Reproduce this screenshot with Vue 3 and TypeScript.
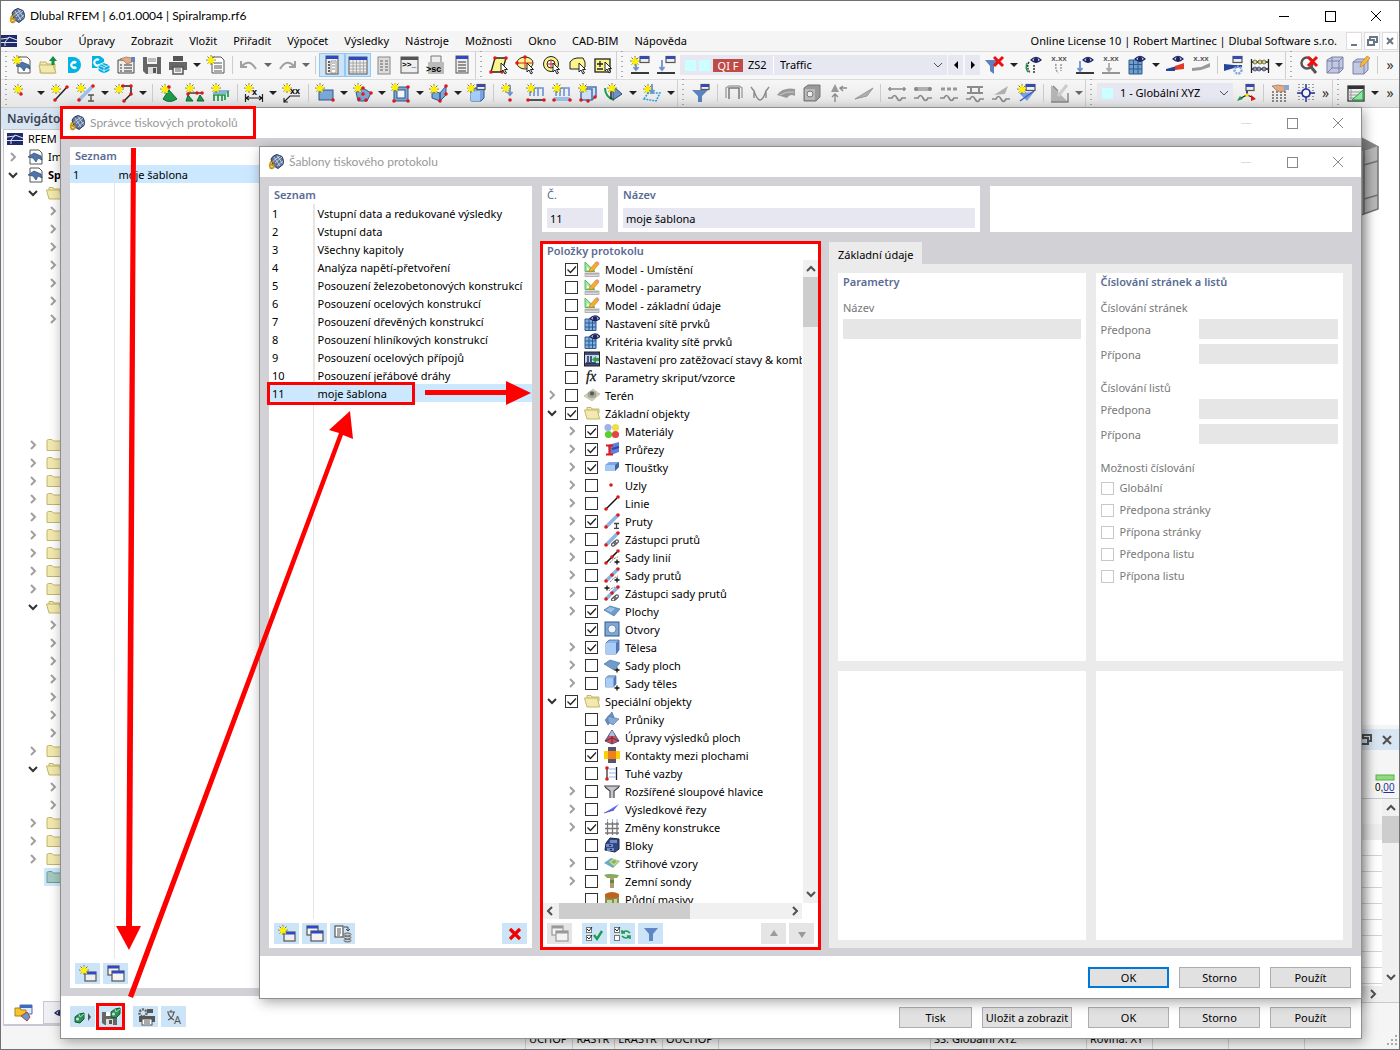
<script setup lang="ts">
import { ref } from 'vue'

type Tool = { k: 'icon' | 'caret' | 'sep' | 'grip'; n?: string; on?: boolean; off?: boolean }
type Item = { t: string; i: string; l: number; c: boolean; e?: 'open' | 'closed' }
type NavRow = { l: number; e?: 'open' | 'closed'; i?: string; t?: string; b?: boolean; s?: boolean }

const star = (x: number, y: number) =>
  `<g transform="translate(${x} ${y})"><path d="M0-5V5M-5 0H5M-3.500-3.500L3.500 3.500M3.500-3.500L-3.500 3.500" stroke="#77774a" stroke-width="1"/><path d="M0-4.500L1.400-1.700 4.500-1 2.300 1.200 3 4.300 0 2.800-3 4.300-2.300 1.200-4.500-1-1.400-1.700z" fill="#fff000"/></g>`
const dot = (x: number, y: number) => `<circle cx="${x}" cy="${y}" r="1.800" fill="#e01818"/>`
const win = (x: number, y: number, w: number, h: number) =>
  `<rect x="${x}" y="${y}" width="${w}" height="${h}" fill="#eee" stroke="#555" stroke-width="1.200"/><rect x="${x}" y="${y}" width="${w}" height="2.500" fill="#2f48c8"/>`
const eye = (x: number, y: number) =>
  `<g transform="translate(${x} ${y})"><path d="M-5 0Q0-5.500 5 0Q0 4.500-5 0z" fill="#c6cdf0" stroke="#1d2460" stroke-width="1.200"/><circle r="2.200" fill="#1d2460"/></g>`
const link = (x: number, y: number) =>
  `<g transform="translate(${x} ${y}) rotate(-40)" fill="none" stroke="#555" stroke-width="1.200"><rect x="-4" y="-1.500" width="5" height="3" rx="1.500"/><rect x="-1" y="-1.500" width="5" height="3" rx="1.500"/></g>`
const plus = (x: number, y: number) => `<path d="M${x - 2.5} ${y}h5M${x} ${y - 2.5}v5" stroke="#111" stroke-width="1.300"/>`
const arrowDown = (x: number, y: number, h: number, c: string) =>
  `<path d="M${x} ${y}v${h}M${x - 2.5} ${y + h - 3}l2.500 3 2.500-3" fill="none" stroke="${c}" stroke-width="1.800"/>`
const xxx = (y: number) => `<text x="10" y="${y}" text-anchor="middle" font-size="8" font-weight="700" font-family="Liberation Sans, sans-serif" fill="#555">x.xx</text>`
const wave = (y: number) => `<path d="M1 ${y}h4q2.500-5 5 0t5 0h4" fill="none" stroke="#8b8b8b" stroke-width="1.700"/>`
const folder = '<path d="M1 4q0-1.500 1.500-1.500h3.500l1.500 1.500h8v9.500h-14.500z" fill="#f2e9ae" stroke="#c3b566"/>'
const ruler = '<path d="M1 1l10 9.500H1z" fill="#9fe6a0" stroke="#5db662"/><path d="M3 6l3 3H3z" fill="#fff"/><path d="M5 9l7-8 3 2-6 7-3 1z" fill="#f4ae2c" stroke="#b77b20" stroke-width=".600"/><path d="M11.500 1.500l1.500-1.500 2.500 2-1.500 2z" fill="#e98f8f"/><rect x="1" y="12" width="14" height="3.500" fill="#ddd" stroke="#999" stroke-width=".700"/><path d="M3 12v2M5 12v2M7 12v2M9 12v2M11 12v2M13 12v2" stroke="#888" stroke-width=".700"/>'
const mesh = '<path d="M1 4h11v11.500H1z" fill="#7fb2e5" stroke="#31598c"/><path d="M5 4v11M8.500 4v11M1 8h11M1 12h11" stroke="#31598c"/>'
const cube = '<path d="M2 4l3-3h10v10l-3 4H2z" fill="#8db5e8" stroke="#44699f" stroke-width=".800"/><path d="M2 4h10v11H2z" fill="#a9cdf8"/><path d="M12 4l3-3v10l-3 4z" fill="#4f78b5"/>'
const beam = '<path d="M2 14L14 2" stroke="#8fb4e4" stroke-width="3.500"/>'
const wins = (c: string, h: string) =>
  `<rect x="2" y="2" width="11" height="9" fill="#f4f4f4" stroke="${c}" stroke-width="1.200"/><rect x="2" y="2" width="11" height="2.500" fill="${h}"/><rect x="6" y="7" width="12" height="10" fill="#f4f4f4" stroke="${c}" stroke-width="1.200"/><rect x="6" y="7" width="12" height="2.500" fill="${h}"/>`
const greenBlock = (x: number, y: number) =>
  `<g transform="translate(${x} ${y})"><path d="M0 4l4-3 5-1v6l-4 4-5-1z" fill="#2f8f58" stroke="#165a34"/><circle cx="2.500" cy="6" r="1.500" fill="#bfe8cf"/><path d="M4 1l1 3 4-3" stroke="#9be0b8" fill="none"/></g>`

// 16 × 16 glyphs used in trees, 20 × 20 glyphs used on tool buttons
const small: Record<string, string> = {
  logo: '<path d="M3 5q2-4 6-4.500l5 2q2.500 4 1 8l-5 4-5-3z" fill="#5b7399" stroke="#2c3c5c"/><path d="M6 3l6 9M9 1.500l5.500 8M5 7l7-5M7 9l7-6M9 12l6-5" stroke="#d5e0f0" stroke-width=".800"/><text x="1" y="15" font-size="10" font-weight="700" font-family="Noto Sans, sans-serif" fill="#e8b40a" stroke="#7a5b00" stroke-width=".400">6</text>',
  rfem: '<path d="M0 2h16v12H0z" fill="#1f2a6b"/><path d="M0 9.500h16M4 9v4M4 9L8 4l8 3M0 6l8-1" stroke="#dfe4f5" fill="none"/>',
  doc: '<path d="M2 1h9l3 3v11H2z" fill="#fff" stroke="#555"/><path d="M0 8l6-4 7 3 1 4-4-2-2 4-3-4z" fill="#4d76a8" stroke="#2b4a73" stroke-width=".700"/>',
  folder,
  folderOpen: '<path d="M3 4v-1.500h4l1 1.500h7v4H3z" fill="#f2e9ae" stroke="#c3b566"/><path d="M0.500 5h13l2 9h-12.500z" fill="#f2e9ae" stroke="#c3b566"/>',
  folderGreen: '<path d="M1 4q0-1.500 1.500-1.500h3.500l1.500 1.500h8v9.500h-14.500z" fill="#a6c9bf" stroke="#6f9c8d"/>',
  ruler,
  mesh: mesh + eye(11, 3.500),
  load: '<rect x=".500" y="1" width="15" height="14" fill="#3d4c78" stroke="#222"/><rect x="1" y="4" width="14" height="8" fill="#c7d5ea"/><path d="M4 5v6M7 5v6M2 12h10" stroke="#1d2c58" stroke-width="1.500"/><path d="M15 7h-3v-2l-4 3.500 4 3.500v-2h3z" fill="#29a444"/>',
  fx: '<text x="2" y="12" font-size="14" font-style="italic" font-family="Liberation Serif, serif" fill="#111" stroke="#111" stroke-width=".300">fx</text>',
  terrain: '<path d="M0 9l9-7 7 5-8 7z" fill="#cfcfbb" stroke="#b3b39b" stroke-width=".600"/><ellipse cx="8" cy="7.500" rx="4.500" ry="3.500" fill="#a4a596"/><circle cx="8" cy="6.500" r="2" fill="#55565a"/>',
  material: '<circle cx="4" cy="4.500" r="3.600" fill="#9fb0ea"/><circle cx="11.500" cy="4.500" r="3.600" fill="#ebe04a"/><circle cx="4.500" cy="11.500" r="3.600" fill="#5ad02a"/><circle cx="11.500" cy="11.500" r="3.600" fill="#e24646"/>',
  section: '<path d="M4 4l11-3v10l-8 3z" fill="#6280d8"/><path d="M8 8l7-2" stroke="#2d47a5" stroke-width="2"/><path d="M2 4.500h7M2 13.500h7M5.500 4.500v9" stroke="#e01818" stroke-width="2.200"/>',
  thick: '<path d="M1 6l4-3 10 0v5l-4 4H1z" fill="#7ea8de"/><path d="M1 6h10v6H1z" fill="#a3c8f4"/><path d="M11 6l4-3v5l-4 4z" fill="#41699f"/>',
  node: dot(7, 8),
  line: '<path d="M2 14L13 3" stroke="#111" stroke-width="1.400"/>' + dot(2, 14) + dot(14, 2),
  member: beam + dot(2, 14) + dot(14, 2) + '<path d="M10 10.500h5M10 15.500h5M12.500 10.500v5" stroke="#444" stroke-width="1.300"/>',
  memberRep: beam + dot(2, 14) + dot(14, 2) + link(11, 12),
  lineSet: '<path d="M2 14L13 3" stroke="#111" stroke-width="1.600"/><path d="M6 14q2-4 8-6" stroke="#777" stroke-dasharray="2 1" fill="none"/>' + dot(2, 14) + dot(8, 8) + dot(14, 2) + plus(13, 13),
  memberSet: beam + '<path d="M6 15q3-4 8-6" stroke="#777" stroke-dasharray="2 1" fill="none"/>' + dot(2, 14) + dot(8, 8) + dot(14, 2) + plus(13, 13),
  memberSetRep: beam + dot(2, 14) + dot(8, 8) + dot(14, 2) + plus(3, 3) + '<path d="M5 6q2-3 6-4" stroke="#777" stroke-dasharray="2 1" fill="none"/>' + link(11, 13),
  surface: '<path d="M0 7l6-4 10 3-6 7z" fill="#6f9cca" stroke="#4a75a6" stroke-width=".700"/><path d="M2 7l4-3 5 1.500-4 4z" fill="#9dc0e4"/>',
  opening: '<rect x="1" y="1" width="14" height="14" fill="#7fa8d4" stroke="#31598c"/><circle cx="8" cy="8" r="4" fill="#eef5fb" stroke="#31598c" stroke-width=".600"/>',
  solid: cube,
  surfaceSet: '<path d="M0 7l6-4 10 3-6 7z" fill="#6f9cca" stroke="#4a75a6" stroke-width=".700"/>' + plus(13, 13),
  solidSet: '<g transform="scale(.800)">' + cube + '</g>' + plus(13, 13),
  intersect: '<path d="M1 9l7-8 2 5-6 8z" fill="#6e95c4" stroke="#44699f" stroke-width=".600"/><path d="M4 5l11 3-6 6-5-3z" fill="#86abd6" stroke="#44699f" stroke-width=".600"/>',
  resultAdj: '<path d="M8 1L1 12l7 3 7-3z" fill="#d64a55" stroke="#3a4d73" stroke-width=".800"/><path d="M8 1v14M1 12l7-3 7 3" stroke="#24365c" stroke-width=".800" fill="none"/><path d="M8 1L5 7h6z" fill="#a9c1e4"/>',
  contact: '<rect x="4" width="8" height="16" fill="#55556c"/><rect y="4" width="16" height="8" fill="#ffcc00"/><rect x="4" y="4" width="8" height="8" fill="#f08018"/>',
  rigid: '<path d="M3 3v11" stroke="#222" stroke-width="1.200"/><path d="M12.500 2v13" stroke="#222" stroke-width="1.300"/><path d="M5 4h7M5 8h7M5 12h7" stroke="#8db7e8"/>' + dot(3, 3) + dot(3, 14),
  column: '<path d="M0 3h16l-5 4-1.500 1v7h-3V8L5 7z" fill="#c3c6d0"/><path d="M0 3h16M1 4l5 4v7M15 4l-5 4v7" stroke="#444" stroke-width="1.200" fill="none"/>',
  cut: '<path d="M0 12L15 3l-5 6z" fill="#5c6ef0"/><path d="M0 12l10-3" stroke="#2c3aa0" stroke-width=".700"/>',
  grid: '<path d="M3.500 3v13M8.500 3v13M13 3v13M1 5h14M1 9.500h14M1 14h14" stroke="#777" stroke-width="1.300"/><path d="M3.500 0v3M8.500 0v3M13 0v3" stroke="#8db7e8"/>',
  block: '<path d="M2 6l4-5 9 1v10l-4 3-10-2z" fill="#32477f" stroke="#18244a"/><path d="M2 7h7v3H2zM3 11h7v3H3zM6 3h7v3H6z" fill="#6e8bcb"/><circle cx="6" cy="8.500" r=".800"/><circle cx="7" cy="12.500" r=".800"/>',
  pattern: '<path d="M0 8l7-5 9 3-7 7z" fill="#69abc4"/><path d="M5 7l4-3 6 2-5 5z" fill="#d6dd58"/><path d="M7 7l3-2 3 1-3 3z" fill="#77b08a"/>',
  probe: '<path d="M0 2q4-2 15 0l-2 3H3z" fill="#7fae5e"/><path d="M6 4h4v11H6z" fill="#b19a6a"/><path d="M6 7h4v3H6z" fill="#5d8a4a"/>',
  soil: '<path d="M1 3q7-4 14 0v4q-7 3-14 0z" fill="#bf641f"/><path d="M1 6q7 3 14 0v9H1z" fill="#8b8b58"/><path d="M3 9h5v4H3zM10 8h3v5h-3z" fill="#b6e08c"/>',
}

const big: Record<string, string> = {
  newModel: '<path d="M6 2h9l3 3v13H6z" fill="#fff" stroke="#555"/><path d="M4 11l6-4 7 3 1 4-4-2-2 4-3-4z" fill="#4d76a8" stroke="#2b4a73" stroke-width=".700"/>' + star(5, 5),
  open: '<path d="M2 7h6l1 2h8v9H2z" fill="#f2e9ae" stroke="#c3b566"/><path d="M1 10h14l3 8H3z" fill="#f2e9ae" stroke="#c3b566"/><path d="M15 1l4 5h-2.500v4h-3V6H11z" fill="#129044"/>',
  cblue: '<path d="M4 2h5a8 8 0 0 1 0 16H4z" fill="#00b4e6"/><path d="M13 7a4 4 0 1 0 0 6l-2-2a1.500 1.500 0 1 1 0-2z" fill="#fff"/>',
  cubes: '<path d="M2 1h8l4 3v9H2z" fill="#00b4e6"/><path d="M9 5a3 3 0 1 0 0 5" stroke="#fff" stroke-width="2" fill="none"/><path d="M8 10l6-2.500 6 2.500v6l-6 3-6-3z" fill="#00a9dc" stroke="#fff"/><path d="M8 10l6 2.500 6-2.500M14 12.500V19M11 9l6 2.500M8 13l6 3 6-3" stroke="#fff" fill="none" stroke-width=".700"/>',
  hand: '<path d="M2 5h16v13H2z" fill="#eee" stroke="#444"/><path d="M4 10h2M8 10h8M4 13h2M8 13h8M4 16h2M8 16h8" stroke="#333"/><path d="M4 4l6-2 6 1v4l-5 2-3-3z" fill="#e0ac86" stroke="#8b5f43" stroke-width=".600"/><path d="M15 2h4v5h-4z" fill="#6386be"/>',
  save: '<path d="M1 2h18v17H4l-3-3z" fill="#666"/><rect x="5" y="2" width="10" height="7" fill="#f4f4f4"/><path d="M6 4h8M6 6h8" stroke="#888"/><rect x="6" y="12" width="9" height="7" fill="#ddd"/><rect x="11" y="13" width="3" height="5" fill="#555"/>',
  print: '<rect x="5" y="1" width="10" height="5" fill="#555"/><path d="M1 7h18v8h-4v-3H5v3H1z" fill="#666"/><path d="M5 12h10v7H5z" fill="#f4f4f4" stroke="#555" stroke-width="1.500"/><path d="M7 14h6M7 16h6" stroke="#666"/>',
  report: '<path d="M6 2h9l3 3v13H6z" fill="#fff" stroke="#555"/><path d="M8 8h8M8 11h8M8 13h8M8 16h8" stroke="#555"/>' + star(5, 5),
  undo: '<path d="M2 6v6h6M3 11q7-8 14 3" fill="none" stroke="#a0a0a0" stroke-width="2"/>',
  redo: '<path d="M18 6v6h-6M17 11q-7-8-14 3" fill="none" stroke="#a0a0a0" stroke-width="2"/>',
  panel: '<rect x="4" y="1" width="12" height="18" fill="#eee" stroke="#555"/><rect x="4" y="1" width="12" height="3" fill="#2f48c8"/><path d="M6 7h2M6 10h2M6 13h2M6 16h2" stroke="#333" stroke-width="1.500"/><path d="M9 6h5v12H9z" fill="#fff" stroke="#777" stroke-width=".700"/><path d="M10 8h3M10 11h3M10 14h3" stroke="#888"/>',
  table: '<rect x="1" y="2" width="18" height="17" fill="#eee" stroke="#555"/><rect x="1" y="2" width="18" height="3" fill="#2f48c8"/><path d="M1 8h18M1 11h18M1 14h18M1 17h18M5 5v14M8.500 5v14M12 5v14M15.500 5v14" stroke="#999" stroke-width=".800"/>',
  panelGrey: '<rect x="4" y="2" width="12" height="17" fill="#ddd" stroke="#888"/><path d="M6 6h3M6 9h3M6 12h3M6 15h3M11 6h3M11 9h3M11 12h3M11 15h3" stroke="#888" stroke-width="1.500"/>',
  console: '<rect x="1" y="2" width="17" height="16" fill="#eee" stroke="#555"/><rect x="1" y="2" width="17" height="3" fill="#555"/><text x="2" y="12" font-size="8" font-weight="700" font-family="Liberation Mono, monospace">&gt;&gt;_</text>',
  script: '<path d="M5 1h10v7H5z" fill="#eee" stroke="#777"/><path d="M2 7h16v12H2z" fill="#bbb"/><text x="0" y="17" font-size="9" font-weight="700" font-family="Liberation Sans, sans-serif">&gt;sc</text>',
  panel2: '<rect x="4" y="1" width="12" height="17" fill="#eee" stroke="#555"/><rect x="4" y="1" width="12" height="3" fill="#2f48c8"/><path d="M6 7h8M6 10h8M6 13h8M6 16h8" stroke="#333" stroke-width="1.200"/>',
  selRect: '<path d="M6 3h11l-4 14H2z" fill="#fbf58c" stroke="#222" stroke-width="1.300"/>' + dot(6, 3) + dot(17, 3) + dot(13, 17) + dot(2, 17) + '<path d="M12 8v9l2-2 2 4 1.500-1-2-3.500h3z" fill="#fff" stroke="#222"/>',
  selEll: '<ellipse cx="10" cy="8" rx="8" ry="6" fill="#fbf58c" stroke="#222"/><path d="M10 3v10M3 8h14" stroke="#e01818"/>' + dot(10, 2) + dot(2, 8) + '<path d="M12 8v9l2-2 2 4 1.500-1-2-3.500h3z" fill="#fff" stroke="#222"/>',
  selRing: '<circle cx="10" cy="9" r="7.500" fill="#fbf58c" stroke="#222"/><circle cx="10" cy="9" r="4" fill="#fff" stroke="#222"/><path d="M10 5v8M6 9h8" stroke="#e01818"/><path d="M12 8v9l2-2 2 4 1.500-1-2-3.500h3z" fill="#fff" stroke="#222"/>',
  selLasso: '<path d="M3 7q3-4 7-4h6l2 4v5q-3 3-7 2H3z" fill="#fbf58c" stroke="#222"/><path d="M12 8v9l2-2 2 4 1.500-1-2-3.500h3z" fill="#fff" stroke="#222"/>',
  selBox: '<rect x="2" y="4" width="15" height="13" fill="#fbf58c" stroke="#222" stroke-width="1.300"/><path d="M7 6v6M4 9h6M4 14h6" stroke="#222" stroke-width="1.300"/><path d="M12 7v9l2-2 2 4 1.500-1-2-3.500h3z" fill="#fff" stroke="#222"/>',
  lcNew: '<path d="M1 18h18" stroke="#222" stroke-width="1.800"/>' + win(10, 1.5, 9, 6) + arrowDown(6, 3, 12, '#6b93cf') + star(5, 6),
  lcEdit: '<path d="M1 18h18" stroke="#222" stroke-width="1.800"/>' + win(10, 1.5, 9, 6) + arrowDown(6, 5, 10, '#6b93cf'),
  filterX: '<path d="M0 5h14L9 11v8l-4-3v-5z" fill="#5b82bd"/><path d="M9 2l9 9M18 2l-9 9" stroke="#ee1010" stroke-width="3"/>',
  eyeDef: eye(13, 5) + '<path d="M6 7q-3 5 1 11M11 10v8" stroke="#333" stroke-width="1.500" fill="none" stroke-dasharray="2 1"/><path d="M4 8q-2 5 1 9" stroke="#1e9b50" stroke-width="1.500" fill="none"/>',
  xxDef: xxx(6) + '<path d="M7 9q-1 5 2 9M12 9v7" stroke="#999" stroke-width="1.500" fill="none" stroke-dasharray="2 1"/>',
  eyeLoad: eye(13, 5) + '<path d="M1 18h18" stroke="#222" stroke-width="1.800"/>' + arrowDown(5, 6, 10, '#6b93cf'),
  xxLoad: xxx(6) + '<path d="M1 18h18" stroke="#888" stroke-width="1.800"/>' + arrowDown(8, 8, 8, '#aaa'),
  meshEye: '<path d="M2 5h13v14H2z" fill="#6fa0d0" stroke="#31598c"/><path d="M6.500 5v14M11 5v14M2 9.500h13M2 14h13" stroke="#31598c"/>' + eye(13, 4),
  eyeRes: '<path d="M1 14l9-2.500v4.500L1 16z" fill="#26459b"/><path d="M10 11l9-3v6l-9 1z" fill="#df3a2a"/>' + eye(13, 4),
  xxRes: xxx(6) + '<path d="M1 13l9-1 9-4v4l-9 3-9 1z" fill="#999"/>',
  resWin: '<path d="M0 9l10 1h8v2l-8 1-10 3z" fill="#26459b"/>' + win(9, 1.5, 9, 6) + '<circle cx="14" cy="15" r="3.500" fill="none" stroke="#7fa4df" stroke-width="2.400" stroke-dasharray="2 1"/>',
  abacus: '<path d="M1.500 4v14M18.500 4v14M1 7h18M1 14h18" stroke="#222" stroke-width="1.300"/><g fill="#ded66e" stroke="#444" stroke-width=".700"><circle cx="5" cy="7" r="2"/><circle cx="10" cy="7" r="2"/><circle cx="14" cy="7" r="2"/></g><g fill="#8393cf" stroke="#333" stroke-width=".700"><circle cx="5" cy="14" r="2"/><circle cx="9" cy="14" r="2"/><circle cx="14" cy="14" r="2"/></g>',
  magX: '<circle cx="8" cy="8" r="5.500" fill="none" stroke="#555" stroke-width="2.500"/><path d="M12 12l5 6" stroke="#555" stroke-width="3"/><path d="M9 2l9 9M18 2l-9 9" stroke="#ee1010" stroke-width="3"/>',
  cubeG: '<path d="M2 5l5-3h11v12l-4 4H2z" fill="#c3c8e2" stroke="#7a80a5"/><path d="M2 6h12v12M14 6l4-4M7 2v11L2 18M7 13h11" fill="none" stroke="#7a80a5"/>',
  cubePen: '<path d="M2 7l4-3h11v11l-4 4H2z" fill="#c3c8e2" stroke="#7a80a5"/><path d="M2 7h11v12M13 7l4-3" fill="none" stroke="#7a80a5"/><path d="M9 12l1-4 6-7 3 2-6 7z" fill="#f6ba3c" stroke="#a87a1e" stroke-width=".600"/>',
  nNode: star(6, 6) + dot(9, 11),
  nLine: '<path d="M5 17L17 4" stroke="#222" stroke-width="1.500"/>' + star(6, 6) + dot(5, 17) + dot(17, 4),
  nMember: '<path d="M3 17L17 3" stroke="#9cc0ea" stroke-width="3.500"/>' + star(5, 5) + dot(3, 17) + dot(17, 3) + '<path d="M12 12h6M12 18h6M15 12v6" stroke="#555" stroke-width="1.400"/>',
  nPoly: '<path d="M7 3h10v8l-7 7" fill="none" stroke="#222" stroke-width="1.500"/>' + star(5, 6) + dot(17, 3) + dot(17, 11) + dot(10, 18) + dot(9, 3),
  nSupport: '<path d="M10 7l8 9q-8 5-14 0z" fill="#1f9a4b" stroke="#0e6c30"/>' + star(6, 6) + dot(10, 4),
  nLineSup: '<path d="M3 10h15" stroke="#222" stroke-width="1.300"/><path d="M3 12l5 6H1zM15 12l4 6h-7z" fill="#1f9a4b" stroke="#0e6c30"/>' + star(5, 5) + dot(12, 10) + dot(3, 11) + dot(17, 10),
  nSurfSup: '<path d="M2 9l5-2h12l-4 4H2z" fill="#8db5d9"/><path d="M2 12h12v5M3 12v6M7 12v6M11 12v6M17 8v6" stroke="#1f9a4b" stroke-width="1.700" fill="none"/>' + star(5, 5),
  dimX: '<path d="M1.500 11v8M18.500 11v8M2 15h16M5 13l-3 2 3 2M15 13l3 2-3 2" stroke="#222" fill="none" stroke-width="1.200"/><text x="8" y="12" font-size="9" font-weight="700" font-family="Liberation Sans, sans-serif">x</text>' + star(5, 5),
  dimXX: '<path d="M18 13H8l-6 6M2 15v4h4" stroke="#222" fill="none" stroke-width="1.200"/><text x="8" y="11" font-size="9" font-weight="700" font-family="Liberation Sans, sans-serif">xx</text>' + star(5, 5),
  nSurf: '<rect x="4" y="7" width="14" height="10" fill="#7ba6d6" stroke="#31598c"/>' + star(5, 5) + dot(18, 17),
  nSurf2: '<path d="M3 9l7-4 8 5-4 8H5z" fill="#7ba6d6" stroke="#31598c"/>' + star(5, 5) + dot(10, 5) + dot(18, 10) + dot(13, 17) + dot(6, 16) + dot(10, 11),
  nOpen: '<rect x="3" y="4" width="14" height="14" fill="#7ba6d6" stroke="#31598c"/><rect x="6" y="7" width="8" height="8" fill="#f5f5f5" stroke="#31598c"/>' + star(4, 4) + dot(17, 4) + dot(17, 18) + dot(3, 18),
  nSolid: '<path d="M3 8l8 2v8l-8-3zM11 10l6-7v9l-6 6z" fill="#7ba6d6" stroke="#31598c"/>' + star(5, 6) + dot(17, 3) + dot(11, 18) + dot(17, 11),
  nSolidW: '<path d="M4 7l3-2h10v10l-3 3H4z" fill="#7ba6e0" stroke="#31598c"/><path d="M4 8h9v10H4z" fill="#a5cdfa"/>' + win(10, 1.5, 8, 5) + star(4, 5),
  lNode: arrowDown(10, 2, 10, '#6b93cf') + star(6, 5) + dot(10, 17),
  lMem: '<path d="M4 5h13v8M8 5v8M12 5v8M4 5v8" stroke="#6b93cf" stroke-width="1.600" fill="none"/><path d="M2 17h16" stroke="#222" stroke-width="1.500"/>' + star(5, 5) + dot(2, 17) + dot(18, 17),
  lSurf: '<path d="M4 5h13v8M8 5v8M12 5v8M4 5v8" stroke="#6b93cf" stroke-width="1.600" fill="none"/><path d="M2 16h16" stroke="#9cc0ea" stroke-width="4"/>' + star(5, 5) + dot(2, 17) + dot(18, 17),
  lSolid: '<path d="M3 6l4-2h11v9l-4 4H3zM3 6h11v11" stroke="#4f76b5" stroke-width="1.600" fill="#cfe0f5"/>' + star(5, 5) + dot(3, 17) + dot(10, 18) + dot(17, 14),
  lFree: '<path d="M1 5q0 9 9 12" stroke="#1e9b50" stroke-width="2" fill="none"/><path d="M9 3v14l9-6z" fill="#6e93c5" stroke="#2b4a73"/><path d="M7 4v12" stroke="#222" stroke-width="1.500"/>' + star(8, 5),
  lDash: '<path d="M2 16l4-6h12l-4 8z" fill="none" stroke="#2aa0e0" stroke-width="1.500" stroke-dasharray="2 1"/>' + star(6, 6) + arrowDown(10, 1, 9, '#6b93cf'),
  filterW: '<path d="M1 7h16l-6 6v6H7v-6z" fill="#5b82bd"/>' + win(10, 1.5, 8, 5),
  r1: '<path d="M5 16V5h10v11" stroke="#777" fill="none" stroke-width="1.500"/><path d="M2 15V5l3-2h10l3 2v10" stroke="#a5a5a5" fill="none" stroke-width="1.500"/>',
  r2: '<path d="M1 4l3 4q6 18 12 0l3-4M4 7v8M16 7v8" stroke="#8b8b8b" fill="none" stroke-width="1.400"/>',
  r3: '<path d="M1 12q6-8 18-6v7q-5-3-8 2z" fill="#999"/><path d="M4 12q6-4 14-3" stroke="#ccc" fill="none"/>',
  r4: '<path d="M2 5l4-3h12v12l-4 4H2z" fill="#999" stroke="#777"/><rect x="3" y="6" width="10" height="11" fill="#bbb"/><circle cx="8" cy="11" r="3" fill="#eee" stroke="#777"/>',
  r5: '<path d="M7 1l4 8H3z" fill="#999"/><path d="M19 5h-6M15 3l-3 2 3 3M7 19v-7M4 14l3-3 3 3" stroke="#8b8b8b" fill="none" stroke-width="1.400"/>',
  r6: '<path d="M1 16L19 5l-6 8z" fill="#b0b0b0" stroke="#999"/>',
  w1: '<path d="M1 6h18M3 4v4M17 4v4" stroke="#8b8b8b" stroke-width="1.600"/>' + wave(15),
  w2: '<path d="M2 6h16" stroke="#b0b0b0" stroke-width="4"/><circle cx="3" cy="6" r="2" fill="#888"/><circle cx="17" cy="6" r="2" fill="#888"/>' + wave(15),
  w3: '<path d="M2 6h16" stroke="#999" stroke-width="3" stroke-dasharray="4 2"/>' + wave(15),
  w4: '<path d="M2 4h16M2 10h16M6 4v6M14 4v6" stroke="#8b8b8b" stroke-width="2"/>' + wave(16),
  w5: '<path d="M3 12L17 3l-3 8z" fill="#b0b0b0"/>' + wave(16),
  wNew: '<path d="M2 10l15-1-7 9z" fill="#7a9ee6"/><path d="M3 18L17 8" stroke="#3c62c4" stroke-width="1.500"/>' + win(9, 1.5, 9, 6) + star(5, 6),
  design: '<path d="M1 2l17 17H1z" fill="#b5b5b5"/><path d="M8 13L17 2" stroke="#ccc" stroke-width="3"/><path d="M3 3l5 5M1 19h17V10" stroke="#888" fill="none" stroke-width="1.500"/>',
  axes: '<path d="M2 16l8-4 7 3" stroke="#222" fill="none" stroke-width="1.200"/><path d="M0 18l3-5 3 3z" fill="#1e9b50"/><path d="M14 12l5 4-5 2z" fill="#e01818"/><path d="M10 12V4" stroke="#26459b" stroke-width="2"/>' + win(9, 1.5, 8, 6) + '<circle cx="10" cy="12" r="1.800" fill="#fd0"/>',
  gridHand: '<path d="M3 8v11M7 8v11M11 8v11M15 8v11" stroke="#666" stroke-width="1.500" stroke-dasharray="2 1"/><path d="M2 3l6-1 7 1v5l-5 1-4-2z" fill="#e0ac86" stroke="#8b5f43" stroke-width=".600"/><path d="M14 2h5v5h-5z" fill="#8ba7cf"/>',
  snap: '<path d="M3 1v18M7 1v18M13 1v18M17 1v18" stroke="#666" stroke-width="1.200" stroke-dasharray="1 2"/><path d="M10 1v18M1 10h18" stroke="#26309b" stroke-width="1.500"/><circle cx="10" cy="10" r="4" fill="#f5f5f5" stroke="#26309b" stroke-width="1.700"/>',
  sheet: '<rect x="2" y="3" width="16" height="15" fill="#eee" stroke="#333" stroke-width="1.300"/><rect x="2" y="3" width="16" height="3" fill="#333"/><path d="M5 6v12M2 9h16M2 12h16M2 15h16" stroke="#999"/><path d="M6 17L17 7v10z" fill="#90e69a" stroke="#1e9b50"/>',
  nWin: win(7, 8, 11, 9) + star(6, 6),
  copyWin: wins('#555', '#2f48c8'),
  copyOff: wins('#999', '#999'),
  toDb: '<rect x="2" y="2" width="8" height="11" fill="#fff" stroke="#555" stroke-width="1.200"/><path d="M4 5h4M4 7h4M4 9h4M4 11h3" stroke="#555"/><path d="M11 3h4v4M13 5l2 2 2-2" stroke="#444" fill="none"/><g fill="#ccc" stroke="#555" stroke-width=".900"><ellipse cx="14.500" cy="16.500" rx="3.500" ry="1.500"/><ellipse cx="14.500" cy="13.500" rx="3.500" ry="1.500"/><ellipse cx="14.500" cy="10.500" rx="3.500" ry="1.500"/></g>',
  del: '<path d="M5 5l10 10M15 5L5 15" stroke="#f00000" stroke-width="3.200"/>',
  checkAll: '<g fill="#fff" stroke="#777"><rect x="1.500" y="3.500" width="5" height="5"/><rect x="1.500" y="11.500" width="5" height="5"/></g><path d="M2 5l2 2 3-4M2 13l2 2 3-4" stroke="#222" fill="none"/><path d="M9 11l3 4 5-8" stroke="#1e9b50" stroke-width="2.400" fill="none"/>',
  checkInv: '<g fill="#fff" stroke="#777"><rect x="1.500" y="3.500" width="5" height="5"/><rect x="1.500" y="11.500" width="5" height="5"/></g><path d="M2 5l2 2 3-4" stroke="#222" fill="none"/><path d="M9 9q4-4 8 0M17 12q-4 4-8 0M9 6v3h3M17 15v-3h-3" stroke="#1e9b50" stroke-width="1.600" fill="none"/>',
  filter: '<path d="M3 4h14l-5 6v7H8v-7z" fill="#5f86c4"/>',
  up: '<path d="M10 6l4 6H6z" fill="#9a9a9a"/>',
  down: '<path d="M10 14L6 8h8z" fill="#9a9a9a"/>',
  export: greenBlock(2, 6) + '<path d="M15 6v8l3-4z" fill="#555"/>',
  saveAs: '<path d="M1 5h15v13H4l-3-2z" fill="#666"/><rect x="5" y="5" width="7" height="4" fill="#fff"/><rect x="5" y="12" width="7" height="6" fill="#ddd"/><rect x="8" y="13" width="3" height="4" fill="#555"/>' + greenBlock(10, 1),
  printSet: '<circle cx="7" cy="6" r="3.500" fill="none" stroke="#666" stroke-width="2.500" stroke-dasharray="2 1"/><rect x="11" y="2" width="6" height="4" fill="#555"/><path d="M3 9h16v6h-3v-2H6v2H3z" fill="#555"/><rect x="6" y="12" width="10" height="6" fill="#fff" stroke="#555"/><path d="M8 14h6M8 16h6" stroke="#555"/>',
  lang: '<path d="M3 5h8M7 3v2M4 13q5-2 6-8M4 6q2 5 6 7" stroke="#555" fill="none" stroke-width="1.200"/><text x="10" y="17" font-size="11" font-family="Noto Sans, sans-serif" fill="#555">A</text>',
}

const ic = (n: string): Tool => ({ k: 'icon', n })
const icons = (...n: string[]): Tool[] => n.map(ic)
const caret: Tool = { k: 'caret' }
const caretOff: Tool = { k: 'caret', off: true }
const sep: Tool = { k: 'sep' }
const grip: Tool = { k: 'grip' }

const row1a: Tool[] = [
  ...icons('newModel', 'open', 'cblue', 'cubes', 'hand', 'save', 'print'), caret, ic('report'), sep,
  ic('undo'), caretOff, ic('redo'), caretOff, sep,
  { k: 'icon', n: 'panel', on: true }, { k: 'icon', n: 'table', on: true },
  ...icons('panelGrey', 'console', 'script', 'panel2'), grip,
  ...icons('selRect', 'selEll', 'selRing', 'selLasso', 'selBox'), grip, ...icons('lcNew', 'lcEdit'),
]
const row1b: Tool[] = [
  ic('filterX'), caret, ...icons('eyeDef', 'xxDef', 'eyeLoad', 'xxLoad', 'meshEye'), caret,
  ...icons('eyeRes', 'xxRes'), sep, ...icons('resWin', 'abacus'), caret, grip, ...icons('magX', 'cubeG', 'cubePen'), sep,
]
const row2a: Tool[] = [
  ic('nNode'), caret, ...icons('nLine', 'nMember'), caret, ic('nPoly'), caret, sep,
  ...icons('nSupport', 'nLineSup', 'nSurfSup'), sep, ic('dimX'), caret, ic('dimXX'), sep,
  ic('nSurf'), caret, ic('nSurf2'), caret, ic('nOpen'), caret, ic('nSolid'), caret, ic('nSolidW'), sep,
  ...icons('lNode', 'lMem', 'lSurf', 'lSolid', 'lFree'), caret, ic('lDash'), caret, grip, ic('filterW'), sep,
  ...icons('r1', 'r2', 'r3', 'r4', 'r5', 'r6'), sep, ...icons('w1', 'w2', 'w3', 'w4', 'w5', 'wNew'), sep,
  ic('design'), caretOff, grip,
]
const row2b: Tool[] = [ic('axes'), sep, ...icons('gridHand', 'snap')]

const menus = ['Soubor', 'Úpravy', 'Zobrazit', 'Vložit', 'Přiřadit', 'Výpočet', 'Výsledky', 'Nástroje', 'Možnosti', 'Okno', 'CAD-BIM', 'Nápověda']

const rep = (n: number, r: NavRow): NavRow[] => Array.from({ length: n }, () => ({ ...r }))
const navRows: NavRow[] = [
  { l: 0, i: 'rfem', t: 'RFEM' },
  { l: 1, e: 'closed', i: 'doc', t: 'Import' },
  { l: 1, e: 'open', i: 'doc', t: 'Spiralramp', b: true },
  { l: 2, e: 'open', i: 'folderOpen' },
  ...rep(7, { l: 3, e: 'closed' }),
  ...rep(6, { l: 3 }),
  ...rep(9, { l: 2, e: 'closed', i: 'folder' }),
  { l: 2, e: 'open', i: 'folderOpen' },
  ...rep(7, { l: 3, e: 'closed' }),
  { l: 2, e: 'closed', i: 'folder' },
  { l: 2, e: 'open', i: 'folderOpen' },
  ...rep(2, { l: 3, e: 'closed' }),
  ...rep(3, { l: 2, e: 'closed', i: 'folder' }),
  { l: 2, i: 'folderGreen', s: true },
]

const templates = [
  'Vstupní data a redukované výsledky', 'Vstupní data', 'Všechny kapitoly', 'Analýza napětí-přetvoření',
  'Posouzení železobetonových konstrukcí', 'Posouzení ocelových konstrukcí', 'Posouzení dřevěných konstrukcí',
  'Posouzení hliníkových konstrukcí', 'Posouzení ocelových přípojů', 'Posouzení jeřábové dráhy', 'moje šablona',
]

const it = (t: string, i: string, l: number, c = false, e?: 'open' | 'closed'): Item => ({ t, i, l, c, e })
const items = ref<Item[]>([
  it('Model - Umístění', 'ruler', 0, true),
  it('Model - parametry', 'ruler', 0),
  it('Model - základní údaje', 'ruler', 0),
  it('Nastavení sítě prvků', 'mesh', 0),
  it('Kritéria kvality sítě prvků', 'mesh', 0),
  it('Nastavení pro zatěžovací stavy & kombinace', 'load', 0),
  it('Parametry skriput/vzorce', 'fx', 0),
  it('Terén', 'terrain', 0, false, 'closed'),
  it('Základní objekty', 'folderOpen', 0, true, 'open'),
  it('Materiály', 'material', 1, true, 'closed'),
  it('Průřezy', 'section', 1, true, 'closed'),
  it('Tloušťky', 'thick', 1, true, 'closed'),
  it('Uzly', 'node', 1, false, 'closed'),
  it('Linie', 'line', 1, false, 'closed'),
  it('Pruty', 'member', 1, true, 'closed'),
  it('Zástupci prutů', 'memberRep', 1, false, 'closed'),
  it('Sady linií', 'lineSet', 1, false, 'closed'),
  it('Sady prutů', 'memberSet', 1, false, 'closed'),
  it('Zástupci sady prutů', 'memberSetRep', 1, false, 'closed'),
  it('Plochy', 'surface', 1, true, 'closed'),
  it('Otvory', 'opening', 1, true),
  it('Tělesa', 'solid', 1, true, 'closed'),
  it('Sady ploch', 'surfaceSet', 1, false, 'closed'),
  it('Sady těles', 'solidSet', 1, false, 'closed'),
  it('Speciální objekty', 'folderOpen', 0, true, 'open'),
  it('Průniky', 'intersect', 1),
  it('Úpravy výsledků ploch', 'resultAdj', 1),
  it('Kontakty mezi plochami', 'contact', 1, true),
  it('Tuhé vazby', 'rigid', 1),
  it('Rozšířené sloupové hlavice', 'column', 1, false, 'closed'),
  it('Výsledkové řezy', 'cut', 1, false, 'closed'),
  it('Změny konstrukce', 'grid', 1, true, 'closed'),
  it('Bloky', 'block', 1),
  it('Střihové vzory', 'pattern', 1, false, 'closed'),
  it('Zemní sondy', 'probe', 1, false, 'closed'),
  it('Půdní masivy', 'soil', 1),
])

const templateName = ref('moje šablona')
const templateNo = ref('11')
const numbering = [
  { id: 'pages', title: 'Číslování stránek' },
  { id: 'sheets', title: 'Číslování listů' },
]
const options = ['Globální', 'Předpona stránky', 'Přípona stránky', 'Předpona listu', 'Přípona listu']
const chev = { closed: 'M5 3l4 4-4 4', open: 'M3 5l4 4 4-4', up: 'M3 9l4-4 4 4', left: 'M9 3L5 7l4 4' }
</script>

<template>
  <div class="app">
    <header class="titlebar">
      <svg class="s16" viewBox="0 0 16 16" v-html="small.logo"></svg>
      <span class="title">Dlubal RFEM | 6.01.0004 | Spiralramp.rf6</span>
      <button class="wb" aria-label="Minimalizovat"><svg viewBox="0 0 12 12"><path d="M1 6h10" /></svg></button>
      <button class="wb" aria-label="Maximalizovat"><svg viewBox="0 0 12 12"><path d="M1 1h10v10H1z" /></svg></button>
      <button class="wb" aria-label="Zavřít"><svg viewBox="0 0 12 12"><path d="M1 1l10 10M11 1L1 11" /></svg></button>
    </header>

    <nav class="menubar">
      <svg class="s16" viewBox="0 0 16 16" v-html="small.rfem"></svg>
      <button v-for="m in menus" :key="m">{{ m }}</button>
      <span class="license">Online License 10 | Robert Martinec | Dlubal Software s.r.o.</span>
      <button class="mdi" aria-label="Minimalizovat dokument"><svg viewBox="0 0 12 12"><path d="M3 10h6" /></svg></button>
      <button class="mdi" aria-label="Obnovit dokument"><svg viewBox="0 0 12 12"><path d="M4 4V2h7v5H8M2 5h6v5H2z" /></svg></button>
      <button class="mdi" aria-label="Zavřít dokument"><svg viewBox="0 0 12 12"><path d="M3 3l6 6M9 3l-6 6" /></svg></button>
    </nav>

    <div class="toolbar">
      <i class="grip first"></i>
      <template v-for="(t, n) in row1a" :key="n">
        <button v-if="t.k === 'icon'" class="tb" :class="{ on: t.on }" :aria-label="t.n"><svg class="s20" viewBox="0 0 20 20" v-html="big[t.n!]"></svg></button>
        <i v-else :class="[t.k, { off: t.off }]"></i>
      </template>
      <div class="loadcase">
        <b class="sw"></b><b class="sw"></b><span class="tag">QI F</span><span class="zs">ZS2</span>
        <select aria-label="Zatěžovací stav"><option>Traffic</option></select>
        <svg class="s14" viewBox="0 0 14 14"><path d="M3 5l4 4 4-4" /></svg>
      </div>
      <button class="step" aria-label="Předchozí"><svg viewBox="0 0 8 8"><path d="M6 0v8L2 4z" /></svg></button>
      <button class="step" aria-label="Další"><svg viewBox="0 0 8 8"><path d="M2 0v8l4-4z" /></svg></button>
      <template v-for="(t, n) in row1b" :key="n">
        <button v-if="t.k === 'icon'" class="tb" :aria-label="t.n"><svg class="s20" viewBox="0 0 20 20" v-html="big[t.n!]"></svg></button>
        <i v-else :class="t.k"></i>
      </template>
      <button class="more last">»</button>
    </div>

    <div class="toolbar second">
      <i class="grip first"></i>
      <template v-for="(t, n) in row2a" :key="n">
        <button v-if="t.k === 'icon'" class="tb" :aria-label="t.n"><svg class="s20" viewBox="0 0 20 20" v-html="big[t.n!]"></svg></button>
        <i v-else :class="[t.k, { off: t.off }]"></i>
      </template>
      <div class="loadcase cs">
        <b class="sw"></b>
        <select aria-label="Souřadný systém"><option>1 - Globální XYZ</option></select>
        <svg class="s14" viewBox="0 0 14 14"><path d="M3 5l4 4 4-4" /></svg>
      </div>
      <template v-for="(t, n) in row2b" :key="n">
        <button v-if="t.k === 'icon'" class="tb" :aria-label="t.n"><svg class="s20" viewBox="0 0 20 20" v-html="big[t.n!]"></svg></button>
        <i v-else :class="t.k"></i>
      </template>
      <button class="more">»</button>
      <i class="grip"></i>
      <button class="tb" aria-label="sheet"><svg class="s20" viewBox="0 0 20 20" v-html="big.sheet"></svg></button>
      <i class="caret"></i>
      <button class="more last">»</button>
    </div>

    <main class="work">
      <aside class="navigator">
        <h2>Navigátor</h2>
        <div class="navtree">
          <div v-for="(r, n) in navRows" :key="n" class="navrow" :class="'l' + r.l">
            <svg v-if="r.l" class="s14 chev" :class="r.e" viewBox="0 0 14 14"><path v-if="r.e" :d="chev[r.e]" /></svg>
            <span class="navlabel" :class="{ sel: r.s, bold: r.b }">
              <svg v-if="r.i" class="s16" viewBox="0 0 16 16" v-html="small[r.i]"></svg>{{ r.t }}
            </span>
          </div>
        </div>
        <div class="navtabs">
          <button class="navtab active" aria-label="Data"><svg class="s20" viewBox="0 0 20 20"><path d="M7 2h12v9H7z" fill="#dfe8f7" stroke="#4a6fb5" /><path d="M7 2h12v3H7z" fill="#3f68c0" /><path d="M2 5h5l1 2h5v6H2z" fill="#f5c62c" stroke="#a9801a" /><path d="M8 13l6-4 3 5-3 4z" fill="#5f9bd2" stroke="#c03a2a" /></svg></button>
          <button class="navtab" aria-label="Zobrazení"><svg class="s20" viewBox="0 0 20 20" v-html="eye(10, 10)"></svg></button>
        </div>
      </aside>

      <section class="center">
        <div class="canvas">
          <svg class="navcube" viewBox="0 0 40 80"><path d="M0 0h21l17 9v63l-17 6H0z" fill="#b9b9b9" /><path d="M0 0h21l17 9-14 5H0z" fill="#858585" /><path d="M38 9v63l-17 6M24 14v62M24 28l14-4M24 62l14-4M20 14v64" fill="none" stroke="#757575" stroke-width="1.500" /></svg>
        </div>
        <div class="dock">
          <div class="dockhead">
            <svg class="s14" viewBox="0 0 14 14"><path d="M4 5V2h8v6H9M2 5h7v6H2z" /></svg>
            <svg class="s14" viewBox="0 0 14 14"><path d="M3 3l8 8M11 3l-8 8" /></svg>
          </div>
          <div class="docktools">
            <svg class="s20" viewBox="0 0 20 20"><rect x="1" y="1" width="18" height="5" fill="#8fdc7c" stroke="#5fae4e" /><text x="0" y="17" font-size="10" font-family="Liberation Sans, sans-serif">0,<tspan fill="#26309b" text-decoration="underline">00</tspan></text></svg>
          </div>
          <div class="sheet">
            <div class="cells"></div>
            <div class="vscroll">
              <svg class="s14" viewBox="0 0 14 14"><path :d="chev.up" /></svg>
              <i class="vthumb short"></i>
              <svg class="s14 end" viewBox="0 0 14 14"><path :d="chev.open" /></svg>
            </div>
          </div>
          <div class="dockscroll"><svg class="s14" viewBox="0 0 14 14"><path :d="chev.closed" /></svg></div>
        </div>
      </section>
    </main>

    <footer class="status">
      <span>UCHOP</span><span>RASTR</span><span>LRASTR</span><span>OUCHOP</span><span></span>
      <span class="cs-name">SS: Globální XYZ</span><span class="plane">Rovina: XY</span><span class="cell"></span><span class="cell"></span><span class="cell"></span>
      <svg class="s14 sizer" viewBox="0 0 14 14"><path d="M10 1h2M10 5h2M10 9h2M6 5h2M6 9h2M2 9h2" stroke="#aaa" stroke-width="2" /></svg>
    </footer>

    <section class="dialog manager" aria-label="Správce tiskových protokolů">
      <header class="titlebar inactive">
        <svg class="s16" viewBox="0 0 16 16" v-html="small.logo"></svg>
        <span class="title">Správce tiskových protokolů</span>
        <button class="wb min" disabled aria-label="Minimalizovat"><svg viewBox="0 0 12 12"><path d="M1 6h10" /></svg></button>
        <button class="wb" aria-label="Maximalizovat"><svg viewBox="0 0 12 12"><path d="M1 1h10v10H1z" /></svg></button>
        <button class="wb" aria-label="Zavřít"><svg viewBox="0 0 12 12"><path d="M1 1l10 10M11 1L1 11" /></svg></button>
      </header>
      <div class="dbody">
        <div class="panel list">
          <h3>Seznam</h3>
          <div class="listwrap"><table><tbody><tr class="sel"><td>1</td><td>moje šablona</td></tr></tbody></table></div>
          <div class="btns">
            <button class="ib" aria-label="Nový"><svg class="s20" viewBox="0 0 20 20" v-html="big.nWin"></svg></button>
            <button class="ib" aria-label="Kopírovat"><svg class="s20" viewBox="0 0 20 20" v-html="big.copyWin"></svg></button>
          </div>
        </div>
      </div>
      <footer class="dfoot">
        <button class="ib" aria-label="Export"><svg class="s20" viewBox="0 0 20 20" v-html="big.export"></svg></button>
        <button class="ib" aria-label="Uložit jako šablonu"><svg class="s20" viewBox="0 0 20 20" v-html="big.saveAs"></svg></button>
        <button class="ib apart" aria-label="Nastavení tisku"><svg class="s20" viewBox="0 0 20 20" v-html="big.printSet"></svg></button>
        <button class="ib" aria-label="Jazyk"><svg class="s20" viewBox="0 0 20 20" v-html="big.lang"></svg></button>
        <div class="actions"><button class="cmd narrow">Tisk</button><button class="cmd wide">Uložit a zobrazit</button><button class="cmd gap">OK</button><button class="cmd">Storno</button><button class="cmd">Použít</button></div>
      </footer>
    </section>

    <section class="dialog templates" aria-label="Šablony tiskového protokolu">
      <header class="titlebar inactive">
        <svg class="s16" viewBox="0 0 16 16" v-html="small.logo"></svg>
        <span class="title">Šablony tiskového protokolu</span>
        <button class="wb min" disabled aria-label="Minimalizovat"><svg viewBox="0 0 12 12"><path d="M1 6h10" /></svg></button>
        <button class="wb" aria-label="Maximalizovat"><svg viewBox="0 0 12 12"><path d="M1 1h10v10H1z" /></svg></button>
        <button class="wb" aria-label="Zavřít"><svg viewBox="0 0 12 12"><path d="M1 1l10 10M11 1L1 11" /></svg></button>
      </header>
      <div class="dbody split">
        <div class="panel list">
          <h3>Seznam</h3>
          <div class="listwrap">
            <table><tbody>
              <tr v-for="(t, n) in templates" :key="t" :class="{ sel: n === 10 }"><td>{{ n + 1 }}</td><td>{{ t }}</td></tr>
            </tbody></table>
          </div>
          <div class="btns">
            <button class="ib" aria-label="Nový"><svg class="s20" viewBox="0 0 20 20" v-html="big.nWin"></svg></button>
            <button class="ib" aria-label="Kopírovat"><svg class="s20" viewBox="0 0 20 20" v-html="big.copyWin"></svg></button>
            <button class="ib" aria-label="Uložit do databáze"><svg class="s20" viewBox="0 0 20 20" v-html="big.toDb"></svg></button>
            <button class="ib push" aria-label="Smazat"><svg class="s20" viewBox="0 0 20 20" v-html="big.del"></svg></button>
          </div>
        </div>

        <div class="detail">
          <div class="toprow">
            <div class="panel field no"><label for="tno">Č.</label><input id="tno" v-model="templateNo" type="text" /></div>
            <div class="panel field name"><label for="tname">Název</label><input id="tname" v-model="templateName" type="text" /></div>
            <div class="panel blank"></div>
          </div>
          <div class="lower">
            <div class="panel contents">
              <h3>Položky protokolu</h3>
              <div class="treewrap">
                <div class="tree">
                  <label v-for="r in items" :key="r.t" class="trow" :class="{ deep: r.l }">
                    <svg class="s14 chev" :class="r.e" viewBox="0 0 14 14"><path v-if="r.e" :d="chev[r.e]" /></svg>
                    <input v-model="r.c" type="checkbox" />
                    <svg class="s16" viewBox="0 0 16 16" v-html="small[r.i]"></svg>
                    <span>{{ r.t }}</span>
                  </label>
                </div>
                <div class="vscroll">
                  <svg class="s14" viewBox="0 0 14 14"><path :d="chev.up" /></svg>
                  <i class="vthumb"></i>
                  <svg class="s14 end" viewBox="0 0 14 14"><path :d="chev.open" /></svg>
                </div>
              </div>
              <div class="hscroll">
                <svg class="s14" viewBox="0 0 14 14"><path :d="chev.left" /></svg>
                <i class="hthumb"></i>
                <svg class="s14 end" viewBox="0 0 14 14"><path :d="chev.closed" /></svg>
              </div>
              <div class="btns">
                <button class="ib dis" aria-label="Kopírovat"><svg class="s20" viewBox="0 0 20 20" v-html="big.copyOff"></svg></button>
                <button class="ib apart" aria-label="Vybrat vše"><svg class="s20" viewBox="0 0 20 20" v-html="big.checkAll"></svg></button>
                <button class="ib" aria-label="Obrátit výběr"><svg class="s20" viewBox="0 0 20 20" v-html="big.checkInv"></svg></button>
                <button class="ib" aria-label="Filtr"><svg class="s20" viewBox="0 0 20 20" v-html="big.filter"></svg></button>
                <button class="ib dis push" aria-label="Nahoru"><svg class="s20" viewBox="0 0 20 20" v-html="big.up"></svg></button>
                <button class="ib dis" aria-label="Dolů"><svg class="s20" viewBox="0 0 20 20" v-html="big.down"></svg></button>
              </div>
            </div>

            <div class="tabs">
              <button class="tab">Základní údaje</button>
              <div class="tabbody">
                <div class="panel form">
                  <h3>Parametry</h3>
                  <label class="sub" for="pname">Název</label>
                  <input id="pname" type="text" disabled />
                </div>
                <div class="panel form">
                  <h3>Číslování stránek a listů</h3>
                  <template v-for="g in numbering" :key="g.id">
                    <p class="sub">{{ g.title }}</p>
                    <div class="pair"><label :for="g.id + 'p'">Předpona</label><input :id="g.id + 'p'" type="text" disabled /></div>
                    <div class="pair"><label :for="g.id + 's'">Přípona</label><input :id="g.id + 's'" type="text" disabled /></div>
                  </template>
                  <p class="sub tight">Možnosti číslování</p>
                  <label v-for="o in options" :key="o" class="opt"><input type="checkbox" disabled />{{ o }}</label>
                </div>
                <div class="panel"></div>
                <div class="panel"></div>
              </div>
            </div>
          </div>
        </div>
      </div>
      <footer class="dfoot">
        <div class="actions"><button class="cmd primary">OK</button><button class="cmd">Storno</button><button class="cmd">Použít</button></div>
      </footer>
    </section>

    <svg class="marks" aria-hidden="true">
      <path fill-rule="evenodd" d="M60 106h196v33H60zM63 109v27h190v-27zM267 382h148v23H267zM270 385v17h142v-17zM96 1003h29v27H96zM99 1006v21h23v-21z" />
      <path d="M131 148h5l-4 778h9l-12 24-13-24h10z" />
      <path d="M425 390h81v-9l25 12-25 12v-10h-81z" />
      <path d="M128 996l211-563-10-3 21-19 3 28-10-4-210 563z" />
    </svg>
  </div>
</template>

<style>
body { margin: 0; background: #fff; }
</style>

<style scoped>
.app { position: relative; box-sizing: border-box; min-height: 100vh; height: 100vh; overflow: hidden; display: flex; flex-direction: column; background: #f5f5f5; border: 1px solid #707070; font: 11px/18px "Noto Sans", "Open Sans", sans-serif; color: #000; }
.app * { box-sizing: border-box; }
button, input, select { font: inherit; color: inherit; margin: 0; padding: 0; border: 0; background: none; border-radius: 0; }
h2, h3, p { margin: 0; font: inherit; }
svg { display: block; flex: none; }
.s14 { width: 14px; height: 14px; fill: none; stroke: #505050; stroke-width: 2; }
.s16 { width: 16px; height: 16px; }
.s20 { width: 20px; height: 20px; }

.titlebar { flex: none; height: 30px; display: flex; align-items: center; background: #fff; padding-left: 8px; font: 12px/18px Lato, "Noto Sans", sans-serif; }
.title { margin-left: 5px; flex: 1; white-space: nowrap; }
.wb { width: 46px; height: 28px; display: flex; align-items: center; justify-content: center; }
.wb svg { width: 12px; height: 12px; fill: none; stroke: #000; stroke-width: 1; }
.wb:not(:last-child) svg { shape-rendering: crispEdges; }
.inactive { color: #999; }
.inactive .wb svg { stroke: #888; }
.inactive .min svg { stroke: #ddd; }

.menubar { flex: none; height: 20px; display: flex; align-items: center; white-space: nowrap; background: #f5f5f5; }
.menubar > button { margin-left: 16px; }
.menubar > button:first-of-type { margin-left: 8px; }
.license { margin-left: auto; margin-right: 8px; }
.menubar > .mdi, .menubar > .mdi:first-of-type { width: 16px; height: 18px; margin: 0 1px; background: #fff; border: 1px solid #ddd; display: flex; align-items: center; justify-content: center; }
.mdi svg { width: 12px; height: 12px; fill: none; stroke: #6a7786; stroke-width: 2; }

.toolbar { flex: none; height: 28px; display: flex; align-items: center; background: #f7f7f7; box-shadow: inset 0 1px #dcdcdc; }
.second { background: linear-gradient(#f7f7f7, #e6e6e6); }
.tb { flex: none; width: 26px; height: 24px; display: flex; align-items: center; justify-content: center; }
.tb.on { background: #cce4f7; border: 1px solid #90c8f6; }
.caret { flex: none; width: 12px; height: 20px; display: flex; align-items: center; justify-content: center; }
.caret::before { content: ""; border: 4px solid transparent; border-top: 4px solid #222; border-bottom: 0; }
.caret.off::before { border-top-color: #666; }
.sep { flex: none; width: 7px; height: 18px; background: linear-gradient(#ccc, #ccc) 3px 0 / 1px 100% no-repeat; }
.grip { flex: none; width: 11px; height: 28px; border-left: 1px solid #d0d0d0; background: radial-gradient(circle, #aaa 1px, transparent 1px) 3px 3px / 4px 5px repeat-y; }
.grip.first { width: 8px; border: 0; }
.loadcase { flex: 1; min-width: 0; height: 20px; margin: 0 1px; padding-left: 5px; display: flex; align-items: center; background: #e7e7f2; }
.loadcase select { flex: 1; min-width: 0; appearance: none; height: 18px; padding-left: 6px; border-left: 1px solid #fff; }
.loadcase .s14 { stroke-width: 1; margin-right: 2px; }
.cs select { border: 0; padding-left: 4px; }
.sw { width: 11px; height: 11px; margin-right: 3px; background: #ccffff; }
.tag { width: 30px; height: 13px; line-height: 13px; text-align: center; color: #fff; background: #bf4b46; }
.zs { width: 30px; padding-left: 5px; }
.step { flex: none; width: 15px; height: 20px; margin-right: 2px; background: #e7e7f2; display: flex; align-items: center; justify-content: center; }
.step svg { width: 8px; height: 8px; }
.more { flex: none; width: 13px; font-size: 14px; color: #333; }
.more.last { width: 18px; }

.work { flex: 1; min-height: 0; display: flex; border-top: 1px solid #c8c8c8; }
.navigator { flex: none; width: 200px; display: flex; flex-direction: column; margin-bottom: 2px; }
.navigator h2 { height: 21px; line-height: 21px; padding-left: 6px; font-size: 12px; font-weight: 600; color: #3b4252; background: #d8e5f3; }
.navtree { flex: 1; min-height: 0; overflow: hidden; margin-left: 2px; background: #fff; border: 1px solid #c9c8d2; border-width: 1px 0 0 1px; }
.navrow { height: 18px; display: flex; align-items: center; padding-left: 3px; }
.l1 { padding-left: 2px; }
.l2 { padding-left: 22px; }
.l3 { padding-left: 42px; }
.navlabel { display: flex; align-items: center; gap: 5px; width: 150px; height: 18px; }
.l1 .navlabel { padding-left: 8px; gap: 4px; }
.l2 .navlabel { padding-left: 6px; }
.navlabel.sel { background: linear-gradient(#cce8ff, #cce8ff) 4px 0 no-repeat; }
.bold { font-weight: 700; }
.chev.closed { stroke: #a0a0a0; }
.chev.open { stroke: #333; }
.navtabs { flex: none; height: 25px; margin-left: 2px; display: flex; border-bottom: 2px solid #c9c8d2; background: #f0f0f4; }
.navtab { width: 40px; padding-left: 6px; border: 1px solid #c9c8d2; }
.navtab.active { padding-left: 9px; background: #fff; border-width: 0 0 0 1px; }

.center { flex: 1; min-width: 0; display: flex; flex-direction: column; margin-bottom: 25px; }
.canvas { flex: 1; background: #fff; display: flex; justify-content: flex-end; align-items: flex-start; padding: 29px 19px 0 0; }
.navcube { width: 40px; height: 80px; }
.dock { flex: none; height: 278px; padding-top: 4px; display: flex; flex-direction: column; border-bottom: 1px solid #c9c8d2; }
.dockhead { flex: none; height: 21px; display: flex; justify-content: flex-end; align-items: center; gap: 7px; padding-right: 5px; background: #d8e5f3; }
.docktools { flex: none; height: 49px; padding: 24px 4px 0 0; display: flex; justify-content: flex-end; border-bottom: 1px solid #c9c8d2; }
.sheet { flex: 1; min-height: 0; display: flex; }
.cells { flex: 1; margin-top: 25px; background: repeating-linear-gradient(#fff 0 15px, #d4d4d4 15px 16px); border-top: 16px solid #eee; }
.dockscroll { flex: none; height: 16px; padding-right: 19px; display: flex; align-items: center; justify-content: flex-end; background: #f0f0f0; }
.vscroll { flex: none; width: 15px; display: flex; flex-direction: column; align-items: center; background: #f0f0f0; padding: 2px 0; }
.dock .vscroll { width: 17px; }
.vthumb { width: 100%; height: 50px; margin-top: 1px; background: #cdcdcd; }
.vthumb.short { height: 27px; }
.vscroll .end { margin-top: auto; }
.hscroll { flex: none; height: 16px; margin-right: 16px; display: flex; align-items: center; background: #f0f0f0; }
.hthumb { width: 131px; height: 16px; margin-left: 2px; background: #cdcdcd; }
.hscroll .end { margin-left: auto; }

.status { flex: none; height: 21px; display: flex; padding-left: 524px; line-height: 22px; white-space: nowrap; }
.status span { padding: 0 5px 0 3px; border-left: 1px solid #d0d0d0; }
.status .cs-name { margin-left: auto; width: 156px; }
.status .plane { width: 66px; }
.status .cell { width: 76px; }
.sizer { align-self: flex-end; margin-left: 5px; }

.dialog { position: absolute; display: flex; flex-direction: column; background: #fff; border: 1px solid #8f8f8f; box-shadow: 2px 3px 12px rgba(0, 0, 0, .35); }
.manager { inset: 106px 37px 10px 59px; }
.templates { inset: 145px 37px 50px 258px; }
.dbody { flex: 1; min-height: 0; padding: 9px 9px 8px; background: #d2d1d6; display: flex; }
.split { gap: 8px; }
.panel { background: #fff; }
.panel h3, .field label { font-weight: 600; color: #5a6b94; }
.panel h3 { padding-left: 5px; height: 18px; }
.list { flex: 1; display: flex; flex-direction: column; }
.split .list { flex: none; width: 263px; }
.listwrap { flex: 1; min-height: 0; background: linear-gradient(#e6e6e6, #e6e6e6) 44px 0 / 1px 100% no-repeat; }
table { width: 100%; border-collapse: collapse; }
td { height: 18px; padding: 2px 0 0 3px; line-height: 16px; white-space: nowrap; }
td:first-child { width: 45px; border-right: 1px solid #e6e6e6; }
.sel td { background: #cce8ff; }
.btns { flex: none; height: 29px; padding: 4px 5px 0; display: flex; gap: 3px; }
.ib { flex: none; width: 25px; height: 21px; display: flex; align-items: center; justify-content: center; background: #cce4f7; }
.ib.dis { background: #e5e5e5; }
.ib.apart { margin-left: 7px; }
.ib.push { margin-left: auto; }
.dfoot { flex: none; height: 42px; padding: 10px 10px 0 9px; display: flex; gap: 3px; }
.actions { margin-left: auto; padding-top: 1px; display: flex; gap: 10px; }
.cmd { width: 81px; height: 21px; background: #e1e1e1; border: 1px solid #adadad; white-space: nowrap; }
.cmd.narrow { width: 73px; }
.cmd.wide { width: 90px; }
.cmd.gap { margin-left: 6px; }
.cmd.primary { border: 2px solid #0078d7; }

.detail { flex: 1; min-width: 0; display: flex; flex-direction: column; gap: 9px; }
.toprow { flex: none; height: 46px; display: flex; gap: 10px; padding-left: 2px; }
.field { padding: 0 5px; display: flex; flex-direction: column; }
.field label { height: 22px; line-height: 18px; }
.field input { width: 100%; height: 20px; padding: 0 3px; background: #e7e7f2; }
.no { width: 66px; }
.no label { font-weight: 400; }
.name { flex: 1; }
.blank { flex: 1; padding: 0 5px; }
.lower { flex: 1; min-height: 0; display: flex; gap: 8px; }
.contents { flex: none; width: 281px; margin-bottom: -2px; border: 3px solid #f00; display: flex; flex-direction: column; }
.contents h3 { padding-left: 4px; height: 16px; line-height: 14px; }
.treewrap { flex: 1; min-height: 0; display: flex; }
.tree { flex: 1; min-width: 0; overflow: hidden; padding-right: 1px; }
.trow { height: 18px; display: flex; align-items: center; padding-left: 2px; white-space: nowrap; overflow: hidden; }
.trow.deep { padding-left: 22px; }
.trow input { flex: none; appearance: none; width: 13px; height: 13px; margin: 0 6px; border: 1px solid #333; background: #fff; }
.trow input:checked { background: url("data:image/svg+xml,%3Csvg xmlns='http://www.w3.org/2000/svg' viewBox='0 0 11 11'%3E%3Cpath d='M1.500 5.500l3 3 5.500-6' fill='none' stroke='%23222' stroke-width='1.300'/%3E%3C/svg%3E"); }
.trow span { margin-left: 5px; padding-top: 2px; line-height: 16px; }
.contents .btns { padding: 4px 4px 0; height: 28px; }

.tabs { flex: 1; min-width: 0; display: flex; flex-direction: column; align-items: flex-start; }
.tab { margin-top: 1px; height: 22px; padding: 3px 9px 0; background: #ebebeb; line-height: 18px; }
.tabbody { flex: 1; min-height: 0; width: 100%; padding: 9px 9px 8px; display: grid; grid-template: 13fr 9fr / 1fr 1fr; gap: 10px; background: #ebebeb; }
.form { padding: 0 5px; color: #777; min-height: 0; overflow: hidden; }
.form h3 { padding: 0; margin-bottom: 8px; }
.form input[type="text"] { display: block; width: 100%; height: 20px; background: #e6e6e6; }
.sub { display: block; height: 20px; line-height: 18px; }
.sub:not(:nth-child(2)) { margin-top: 15px; }
.sub.tight { height: 18px; }
.pair { display: grid; grid-template-columns: 98px 1fr; height: 20px; line-height: 22px; }
.pair + .pair { margin-top: 5px; }
.opt { height: 22px; display: flex; align-items: center; }
.opt input { appearance: none; width: 13px; height: 13px; margin-right: 6px; border: 1px solid #c9c9c9; }

.marks { position: absolute; top: -1px; left: -1px; width: calc(100% + 2px); height: calc(100% + 2px); fill: #f00; pointer-events: none; }
</style>
